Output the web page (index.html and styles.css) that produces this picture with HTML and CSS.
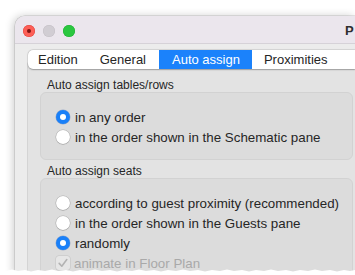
FILE: index.html
```html
<!DOCTYPE html>
<html>
<head>
<meta charset="utf-8">
<link rel="stylesheet" href="styles.css">
</head>
<body>
<div class="window">
  <div class="titlebar">
    <div class="lights">
      <span class="light red"><span class="dot"></span></span>
      <span class="light gray"></span>
      <span class="light green"></span>
    </div>
    <div class="title">P</div>
  </div>
  <div class="content">
    <div class="tabs">
      <div class="tab first">Edition</div>
      <div class="sep"></div>
      <div class="tab general">General</div>
      <div class="tab selected">Auto assign</div>
      <div class="tab prox">Proximities</div>
      <div class="sep"></div>
      <div class="tab blank"></div>
    </div>
    <div class="panel">
      <div class="group-label">Auto assign tables/rows</div>
      <div class="group">
        <div class="row"><span class="radio on"></span><span class="label">in any order</span></div>
        <div class="row"><span class="radio"></span><span class="label">in the order shown in the Schematic pane</span></div>
      </div>
      <div class="group-label second">Auto assign seats</div>
      <div class="group">
        <div class="row"><span class="radio"></span><span class="label">according to guest proximity (recommended)</span></div>
        <div class="row"><span class="radio"></span><span class="label">in the order shown in the Guests pane</span></div>
        <div class="row"><span class="radio on"></span><span class="label">randomly</span></div>
        <div class="row disabled"><span class="check"><svg width="14" height="14" viewBox="0 0 14 14"><path d="M3.2 7.4 L5.8 10.2 L10.8 3.6" fill="none" stroke="#b3b3b3" stroke-width="1.6" stroke-linecap="round" stroke-linejoin="round"/></svg></span><span class="label">animate in Floor Plan</span></div>
      </div>
    </div>
  </div>
</div>
<svg class="torn" width="355" height="8" viewBox="0 0 355 8" preserveAspectRatio="none"><polygon points="0,8 0,3 6,4 12,2.5 18,4 25,3 31,4.5 38,3 45,4 52,2.5 58,4 66,3 73,4.5 80,3 88,4 95,2.5 102,4 110,3 117,4.5 124,3 132,4 139,2.5 146,4 154,3 161,4.5 168,3 176,4 183,2.5 190,4 198,3 205,4.5 212,3 220,4 227,2.5 234,4 242,3 249,4.5 256,3 264,4 271,2.5 278,4 286,3 293,4.5 300,3 308,4 315,2.5 322,4 330,3 337,4.5 344,3 350,4 355,3 355,8" fill="#ffffff"/></svg>
</body>
</html>
```

FILE: styles.css
```css
html, body {
  margin: 0;
  padding: 0;
  overflow: hidden;
  background: #ffffff;
  width: 355px;
  height: 275px;
}
body {
  font-family: "Liberation Sans", Arial, sans-serif;
  color: #262626;
  position: relative;
}
.window {
  margin: 16px 0 0 15px;
  width: 340px;
  height: 259px;
  background: #ececec;
  border-top-left-radius: 10px;
  box-shadow: -2px 0 9px rgba(0, 0, 0, 0.2), 0 0 0 0.5px rgba(0, 0, 0, 0.18);
  overflow: hidden;
}
.titlebar {
  height: 27px;
  background: #ebe6ed;
  border-bottom: 1px solid #d6d2d8;
  display: flex;
  align-items: center;
}
.lights {
  display: flex;
  gap: 8px;
  padding-left: 8px;
  margin-top: 2px;
}
.light {
  width: 12px;
  height: 12px;
  border-radius: 50%;
  display: flex;
  align-items: center;
  justify-content: center;
}
.red { background: #fd5f57; box-shadow: inset 0 0 0 0.5px #e0443e; }
.gray { background: #d1cdd3; box-shadow: inset 0 0 0 0.5px #c3bfc5; }
.green { background: #2ac73f; box-shadow: inset 0 0 0 0.5px #1fae33; }
.dot {
  width: 4px;
  height: 4px;
  border-radius: 50%;
  background: #7e1410;
}
.title {
  margin-left: 270px;
  margin-top: 2px;
  font-size: 13px;
  font-weight: bold;
  color: #2f2f2f;
  white-space: nowrap;
}
.content {
  padding: 6px 0 0 12px;
}
.tabs {
  position: relative;
  z-index: 1;
  margin-left: 1px;
  display: flex;
  height: 19px;
  background: #ffffff;
  border-radius: 5px 0 0 5px;
  box-shadow: 0 0.5px 1.5px rgba(0, 0, 0, 0.28), 0 0 0 0.5px rgba(0, 0, 0, 0.1);
}
.tab {
  font-size: 13px;
  line-height: 19px;
  padding: 0 12px;
  white-space: nowrap;
  color: #252525;
}
.tab.first {
  padding: 0 9px 0 10px;
  border-radius: 5px 0 0 5px;
}
.tab.general {
  padding: 0 13px;
}
.tab.selected {
  background: #1b82fb;
  color: #ffffff;
  padding: 0 12px 0 13px;
}
.tab.blank {
  flex: 1;
}
.sep {
  width: 1px;
  background: #dcdcdc;
  margin: 3px 0;
}
.panel {
  margin-top: -9px;
  background: #e3e3e3;
  border: 1px solid #d4d4d4;
  border-right: none;
  border-radius: 5px 0 0 5px;
  padding: 18px 0 0 12px;
  height: 220px;
}
.group-label {
  font-size: 12px;
  line-height: 13px;
  margin-left: 7px;
  color: #262626;
}
.group-label.second {
  margin-top: 5px;
}
.group {
  background: #dcdcdc;
  border: 1px solid #d2d2d2;
  border-radius: 6px;
  width: 296px;
  padding: 14px 0 12px 15px;
}
.row {
  display: flex;
  align-items: center;
  height: 20px;
}
.label {
  font-size: 13.35px;
  margin-left: 5px;
  white-space: nowrap;
}
.radio {
  width: 14px;
  height: 14px;
  border-radius: 50%;
  background: #ffffff;
  box-shadow: 0 0 0 0.5px rgba(0, 0, 0, 0.2), 0 0.5px 1px rgba(0, 0, 0, 0.18);
  display: flex;
  align-items: center;
  justify-content: center;
  flex: none;
}
.radio.on {
  background: #1a80f8;
  box-shadow: 0 0 0 0.5px rgba(0, 60, 160, 0.3);
}
.radio.on::after {
  content: "";
  width: 6px;
  height: 6px;
  border-radius: 50%;
  background: #ffffff;
}
.check {
  width: 14px;
  height: 14px;
  border-radius: 3px;
  background: #e6e6e6;
  box-shadow: 0 0 0 0.5px rgba(0, 0, 0, 0.12);
  flex: none;
  display: flex;
}
.row.disabled .label {
  color: #a9a9a9;
  margin-left: 4px;
}
.torn {
  position: absolute;
  left: 0;
  top: 267px;
  display: block;
}
```
